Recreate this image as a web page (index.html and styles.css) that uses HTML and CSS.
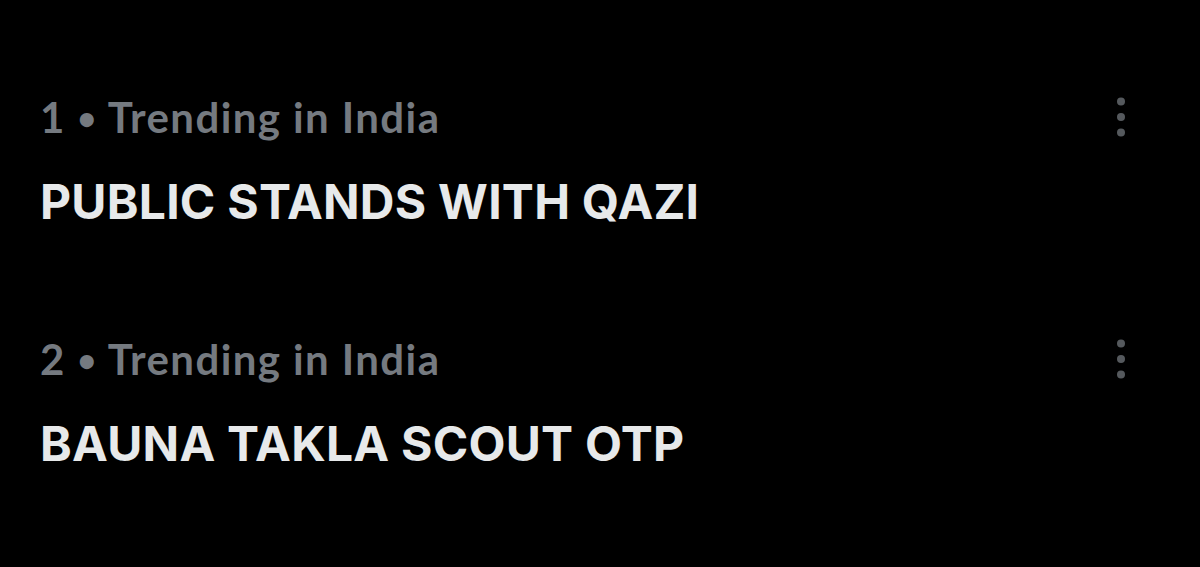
FILE: index.html
```html
<!DOCTYPE html>
<html lang="en">
<head>
    <meta charset="UTF-8">
    <meta name="viewport" content="width=device-width, initial-scale=1.0">
    <title>Trending</title>
    <link rel="stylesheet" href="styles.css">
</head>
<body>
    <div class="trends">
        <div class="trend">
            <div class="trend-meta">
                <span>1 <span class="sep">•</span> Trending in India</span>
                <button class="more" type="button" aria-label="More">
                    <svg width="10" height="40" viewBox="0 0 10 40"><circle cx="5" cy="4.5" r="4"/><circle cx="5" cy="20" r="4"/><circle cx="5" cy="35.5" r="4"/></svg>
                </button>
            </div>
            <div class="trend-name">PUBLIC STANDS WITH QAZI</div>
        </div>
        <div class="trend">
            <div class="trend-meta">
                <span>2 <span class="sep">•</span> Trending in India</span>
                <button class="more" type="button" aria-label="More">
                    <svg width="10" height="40" viewBox="0 0 10 40"><circle cx="5" cy="4.5" r="4"/><circle cx="5" cy="20" r="4"/><circle cx="5" cy="35.5" r="4"/></svg>
                </button>
            </div>
            <div class="trend-name">BAUNA TAKLA SCOUT OTP</div>
        </div>
    </div>
</body>
</html>
```

FILE: styles.css
```css
body {
    margin: 0;
    padding: 0;
    background-color: #000;
    color: #e7e9ea;
    font-family: Inter, "Liberation Sans", sans-serif;
}
.trends {
    display: flex;
    flex-direction: column;
    gap: 103px;
    padding: 92px 74px 0 40px;
}
.trend {
    display: flex;
    flex-direction: column;
    gap: 31px;
}
.trend-meta {
    display: flex;
    justify-content: space-between;
    align-items: center;
    font-family: Lato, "Open Sans", sans-serif;
    font-weight: 700;
    font-size: 42px;
    line-height: 1.2;
    letter-spacing: 1.4px;
    color: #757a80;
}
.sep {
    font-size: 32px;
    vertical-align: 3px;
}
.more {
    background: none;
    border: none;
    padding: 0;
    display: flex;
    cursor: pointer;
}
.more svg {
    fill: #55595d;
}
.trend-name {
    font-weight: 700;
    font-size: 48px;
    line-height: 1.2;
    letter-spacing: 0.25px;
}
```
